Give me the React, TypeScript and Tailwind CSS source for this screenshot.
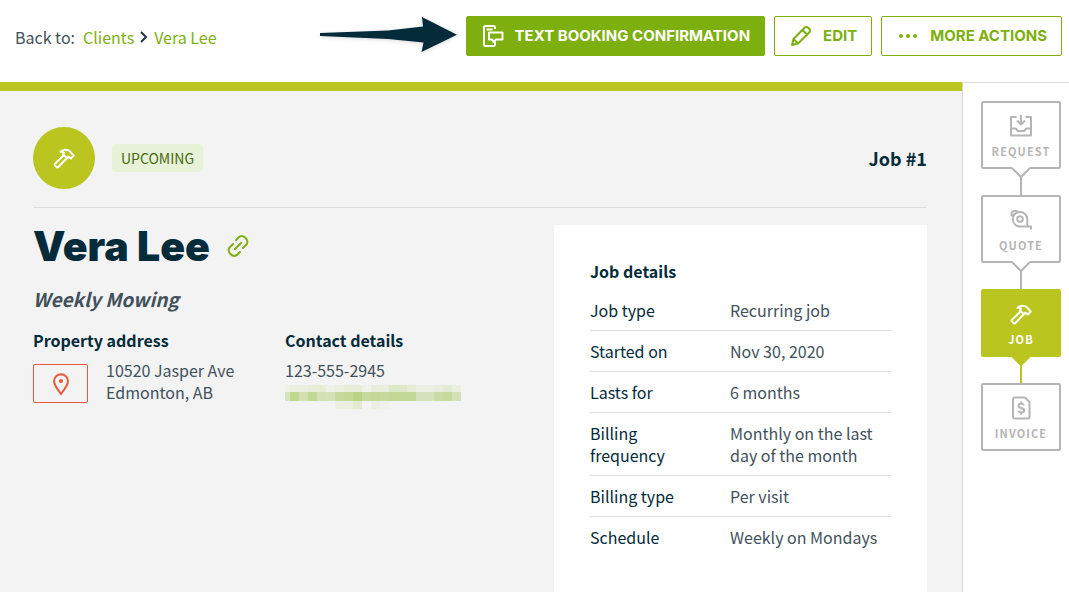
import React from 'react';

type StageName = 'Request' | 'Quote' | 'Job' | 'Invoice';

const stages: StageName[] = ['Request', 'Quote', 'Job', 'Invoice'];

const jobDetails = [
    { label: 'Job type', value: 'Recurring job' },
    { label: 'Started on', value: 'Nov 30, 2020' },
    { label: 'Lasts for', value: '6 months' },
    { label: 'Billing frequency', value: 'Monthly on the last day of the month' },
    { label: 'Billing type', value: 'Per visit' },
    { label: 'Schedule', value: 'Weekly on Mondays' },
];

// Each row is a list of block colours, 9px wide, the first one cut off by the left edge
const redactedRows = [
    { y: 0, height: 7, fills: ['#eef2e8', '#eaf0df', '#eaf0df', '#e6edd9', '#e6edd9', '#eef2e8', '#ebf0e2', '#e6edd8', '#e6edd8', '#eff2ea', '#e8eedd', '#e8eedd', '#dce8ca', '#dce8ca', '#e4ecd6', '#ebf0e2', '#ebf0e2', '#e8eedd', '#e3ebd4', '#eaf0df'] },
    { y: 7, height: 9, fills: ['#d6e3be', '#c0d78e', '#d1dfb3', '#c3d895', '#d2e0b6', '#d3e0b8', '#c6da9d', '#c3d897', '#b9d284', '#c6da9d', '#c4d998', '#c6da9d', '#c3d897', '#c3d897', '#c2d896', '#d5e2bd', '#d5e2bd', '#c9dca3', '#c6da9c', '#d3e1b9'] },
    { y: 16, height: 8, fills: ['', '', '', '', '', '', '#ebf0e2', '#ebf0e2', '#e1ebcf', '', '#ebf0e2', '#eff2ea', '', '', '', '', '', '', '', ''] },
];

const HammerIcon: React.FC<{ className?: string }> = ({ className }) => (
    <svg viewBox="0 0 24 24" className={className} fill="none" stroke="currentColor" strokeWidth="2" strokeLinejoin="round" aria-hidden="true">
        <path d="M11.5 9.5 3.3 17.500a1.700 1.700 0 0 0 0 2.400l.9.9a1.700 1.700 0 0 0 2.400 0L14.500 12.500" />
        <path d="M8.500 5.800C11 3.300 15.500 2.900 18 5.400l3.700 4.200-2.900 3-2.300-2L15 12.300l-4.200-4.200L12 6.800c-1-.9-2.200-1.100-3.500-1z" />
    </svg>
);

const StageIcon: React.FC<{ name: StageName }> = ({ name }) => {
    if (name === 'Job') {
        return <HammerIcon className="h-6 w-6" />;
    }
    return (
        <svg viewBox="0 0 24 24" className="h-6 w-6" fill="none" stroke="currentColor" strokeWidth="2" strokeLinejoin="round" aria-hidden="true">
            {name === 'Request' && (
                <>
                    <path d="M7.500 3H2v18.500h20V3h-5.500" />
                    <path d="M12 1v9M8 6.500l4 4 4-4" />
                    <path d="M2 14.500h5l1.500 2.500h7l1.500-2.500h5" />
                </>
            )}
            {name === 'Quote' && (
                <>
                    <path d="M22 21.500V18.500H11A7.300 7.300 0 1 1 18.300 11v7.500" />
                    <path d="M5.500 5.500 4.500 7.500H2.500V5.500A2.500 2.500 0 0 1 5 3h3.500" />
                    <circle cx="11" cy="11" r="2.800" />
                </>
            )}
            {name === 'Invoice' && (
                <>
                    <path d="M5.500 1.500h10.500l4.500 4.500v15a1.500 1.500 0 0 1-1.500 1.500H5.500A1.500 1.500 0 0 1 4 21V3a1.500 1.500 0 0 1 1.500-1.500z" />
                    <path d="M15 9.200c-.5-1-1.500-1.500-2.800-1.500-1.600 0-2.700.8-2.700 2 0 3 5.700 1.500 5.700 4.600 0 1.300-1.200 2.200-2.900 2.200-1.500 0-2.600-.6-3.100-1.700M12.200 5.500v2.200M12.200 16.500v2.200" />
                </>
            )}
        </svg>
    );
};

const StageCard: React.FC<{ name: StageName; last: boolean }> = ({ name, last }) => {
    const active = name === 'Job';
    return (
        <li className="flex flex-col items-center">
            <a
                href={`#${name.toLowerCase()}`}
                className={`flex h-17 w-20 flex-col items-center justify-center gap-1 rounded-xs border-2 pt-1 ${
                    active ? 'border-[#bac520] bg-[#bac520] text-white' : 'border-[#b5b5b5] bg-white text-[#b5b5b5]'
                }`}
            >
                <StageIcon name={name} />
                <span className="text-[11px] leading-[18px] font-bold tracking-widest uppercase">{name}</span>
            </a>
            {!last && (
                <svg viewBox="0 0 20 28" className={`-mt-0.5 h-7 w-5 ${active ? 'text-[#bac520]' : 'text-[#b5b5b5]'}`} aria-hidden="true">
                    <path d="M1 0h18v2H1z" fill={active ? 'currentColor' : 'white'} />
                    <path d="M1 1 10 10 19 1" fill={active ? 'currentColor' : 'white'} stroke="currentColor" strokeWidth="2" />
                    <path d="M10 10v18" stroke="currentColor" strokeWidth="2" />
                </svg>
            )}
        </li>
    );
};

const App: React.FC = () => {
    return (
        <div className="flex min-h-screen flex-col bg-white font-['Noto_Sans_CJK_SC','Open_Sans',sans-serif] text-base text-[#42515b]">
            <header className="flex items-start justify-between py-4 pr-[7px] pl-[15px]">
                <nav className="flex h-[42px] items-center text-base">
                    <span className="mr-2">Back to:</span>
                    <a href="#clients" className="text-[#7db00e]">Clients</a>
                    <svg viewBox="0 0 8 12" className="mx-1.5 h-3 w-2" fill="none" stroke="#233740" strokeWidth="2" aria-hidden="true">
                        <path d="m1 1 5 5-5 5" />
                    </svg>
                    <a href="#vera-lee" className="text-[#7db00e]">Vera Lee</a>
                </nav>

                <div className="flex items-start">
                    <svg viewBox="0 0 140 40" className="mr-2 h-10 w-35 drop-shadow-sm" fill="#032b3a" aria-hidden="true">
                        <path d="M2 17 70 14.500l35-4-1-9.500 35 17.700-35.500 17.300 2-9.500-35.500-3.500L2 20z" />
                    </svg>
                    <div className="flex gap-[9px] font-[Inter,'Open_Sans',sans-serif] text-[15px] font-bold">
                        <button type="button" className="flex h-10 items-center gap-2.5 rounded-xs bg-[#7db00e] px-[15px] text-white">
                            <svg viewBox="0 0 24 24" className="h-6 w-6" fill="none" stroke="currentColor" strokeWidth="2" strokeLinejoin="round" aria-hidden="true">
                                <path d="M14 17.500V20.500a1.500 1.500 0 0 1-1.500 1.500H4.500A1.500 1.500 0 0 1 3 20.500v-17A1.500 1.500 0 0 1 4.500 2h8A1.500 1.500 0 0 1 14 3.500V5M5.500 5.500h6" />
                                <path d="M8 8.500h13.500v7H15L12.500 18l-1.500-2.500H8z" />
                            </svg>
                            TEXT BOOKING CONFIRMATION
                        </button>
                        <button type="button" className="flex h-10 items-center gap-2.5 rounded-xs border border-[#7db00e] px-3.5 text-[#7db00e]">
                            <svg viewBox="0 0 24 24" className="h-6 w-6" fill="none" stroke="currentColor" strokeWidth="2" strokeLinejoin="round" aria-hidden="true">
                                <path d="M3 21l1.500-6L15.500 3.800a2.500 2.500 0 0 1 3.700 0l1 1a2.500 2.500 0 0 1 0 3.700L9 19.500zM4.500 15 9 19.500M13.500 6l4.500 4.500" />
                            </svg>
                            EDIT
                        </button>
                        <button type="button" className="flex h-10 items-center gap-2.5 rounded-xs border border-[#7db00e] px-3.5 text-[#7db00e]">
                            <svg viewBox="0 0 24 24" className="h-6 w-6" fill="currentColor" aria-hidden="true">
                                <circle cx="5" cy="12" r="2" />
                                <circle cx="12" cy="12" r="2" />
                                <circle cx="19" cy="12" r="2" />
                            </svg>
                            MORE ACTIONS
                        </button>
                    </div>
                </div>
            </header>

            <div className="mt-2 flex flex-1">
                <main className="flex flex-1 flex-col rounded-tr-xs border-t-9 border-r border-t-[#bac520] border-r-[#dcdcdc] bg-[#f3f3f3] pr-[35px] pl-[33px]">
                    <div className="mt-9 flex items-center border-b border-[#dcdfe0] pb-[18px]">
                        <div className="flex size-[62px] items-center justify-center rounded-full bg-[#bac520] text-white">
                            <HammerIcon className="h-6 w-6" />
                        </div>
                        <span className="ml-[17px] rounded-sm bg-[#e8f2d9] px-[9px] text-sm leading-7 text-[#47690d]">UPCOMING</span>
                        <span className="ml-auto text-lg font-bold text-[#032b3a]">Job #1</span>
                    </div>

                    <div className="flex flex-1 justify-between">
                        <section className="pt-3.5">
                            <div className="flex items-center gap-4">
                                <h1 className="font-[Inter,'Open_Sans',sans-serif] text-[41px] leading-12 font-black text-[#032b3a]">Vera Lee</h1>
                                <svg viewBox="0 0 24 24" className="h-6 w-6 text-[#7db00e]" fill="none" stroke="currentColor" strokeWidth="2" strokeLinecap="round" aria-hidden="true">
                                    <path d="m10 6 2.500-2.500a4.500 4.500 0 0 1 6.500 0l1 1a4.500 4.500 0 0 1 0 6.500l-3 3M14 18l-2.500 2.500a4.500 4.500 0 0 1-6.500 0l-1-1a4.500 4.500 0 0 1 0-6.500l3-3M9 15l6-6" />
                                </svg>
                            </div>
                            <p className="mt-[17px] text-[19px] leading-6 font-bold italic">Weekly Mowing</p>

                            <div className="mt-[17px] flex">
                                <div className="w-63">
                                    <h2 className="font-bold text-[#032b3a]">Property address</h2>
                                    <div className="mt-[7px] flex items-end gap-[18px]">
                                        <a href="#map" aria-label="Property address" className="flex h-[39px] w-[55px] items-center justify-center rounded-xs border border-[#e8593c] text-[#e8593c]">
                                            <svg viewBox="0 0 24 24" className="h-6 w-6" fill="none" stroke="currentColor" strokeWidth="2" aria-hidden="true">
                                                <path d="M12 22C8.500 17.500 5 13 5 9.300a7 7 0 0 1 14 0C19 13 15.500 17.500 12 22z" />
                                                <circle cx="12" cy="9" r="2" fill="currentColor" stroke="none" />
                                            </svg>
                                        </a>
                                        <address className="leading-[22px] not-italic">10520 Jasper Ave<br />Edmonton, AB</address>
                                    </div>
                                </div>
                                <div>
                                    <h2 className="font-bold text-[#032b3a]">Contact details</h2>
                                    <p className="mt-[7px] leading-[22px]">123-555-2945</p>
                                    <svg viewBox="0 0 177 24" className="mt-1 h-6 w-[177px]" shapeRendering="crispEdges" aria-hidden="true">
                                        {redactedRows.map((row) =>
                                            row.fills.map((fill, i) => fill && (
                                                <rect key={`${row.y}-${i}`} x={i * 9 - 4} y={row.y} width="9" height={row.height} fill={fill} />
                                            ))
                                        )}
                                    </svg>
                                </div>
                            </div>
                        </section>

                        <section className="mt-[17px] w-[373px] rounded-t-xs bg-white px-9 pt-[34px]">
                            <h2 className="font-bold text-[#032b3a]">Job details</h2>
                            <dl className="mt-[7px] divide-y divide-[#dcdfe0]">
                                {jobDetails.map((detail) => (
                                    <div key={detail.label} className="flex py-[9px] leading-[22px]">
                                        <dt className="w-35 pr-10 text-[#032b3a]">{detail.label}</dt>
                                        <dd className="flex-1">{detail.value}</dd>
                                    </div>
                                ))}
                            </dl>
                        </section>
                    </div>
                </main>

                <aside className="border-t border-[#dcdcdc] pt-[18px] pr-2 pl-[18px]">
                    <ol>
                        {stages.map((name, i) => (
                            <StageCard key={name} name={name} last={i === stages.length - 1} />
                        ))}
                    </ol>
                </aside>
            </div>
        </div>
    );
};

export default App;
